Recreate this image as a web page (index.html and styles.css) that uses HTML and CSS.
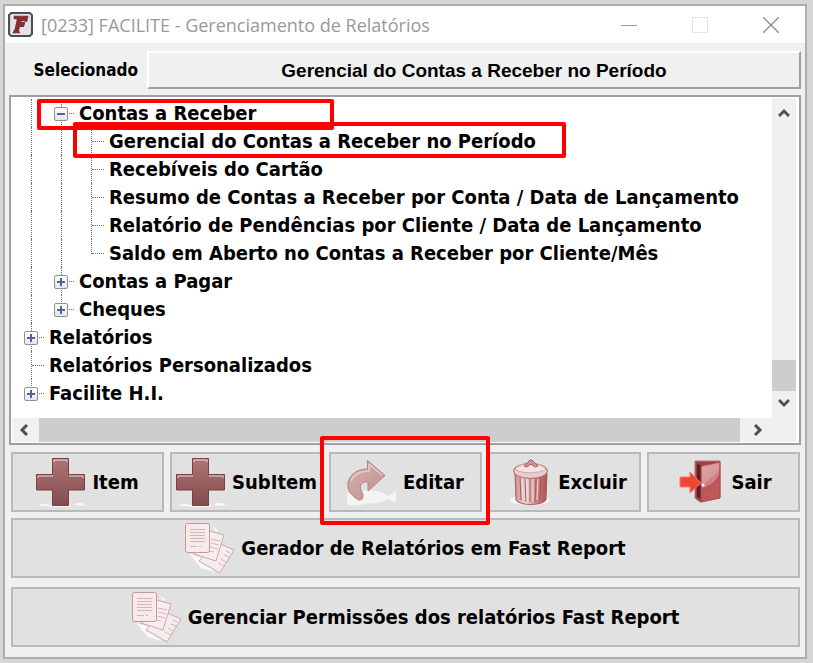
FILE: index.html
```html
<!DOCTYPE html>
<html lang="pt-BR">
<head>
  <meta charset="UTF-8">
  <title>Gerenciamento de Relatórios</title>
  <link rel="stylesheet" href="styles.css">
</head>

<body>
  <svg class="defs" aria-hidden="true">
    <defs>
      <linearGradient id="plus-fill" x1="0" y1="0" x2="0" y2="1">
        <stop offset="0" stop-color="#b07474"/>
        <stop offset="1" stop-color="#834c4e"/>
      </linearGradient>
      <linearGradient id="arrow-fill" x1="0" y1="0" x2="1" y2="1">
        <stop offset="0" stop-color="#d3b0b0"/>
        <stop offset="1" stop-color="#c39090"/>
      </linearGradient>
      <linearGradient id="bin-fill">
        <stop offset="0" stop-color="#c98b8b"/>
        <stop offset="0.35" stop-color="#f1dada"/>
        <stop offset="0.65" stop-color="#cd8484"/>
        <stop offset="1" stop-color="#ad4f4f"/>
      </linearGradient>
      <linearGradient id="door-fill" x1="0" y1="0" x2="0.4" y2="1">
        <stop offset="0" stop-color="#d39090"/>
        <stop offset="0.5" stop-color="#cb7878"/>
        <stop offset="0.55" stop-color="#b85457"/>
        <stop offset="1" stop-color="#bd5b5d"/>
      </linearGradient>
      <symbol id="icon-plus" viewBox="0 0 50 50">
        <path d="M2 49l4-2h6l3 2zM13 48h22v2H13zM37 48l4-2h5l4 3z" fill="#f8f8f8"/>
        <path d="M16.500 1.500h16v16h16v15.500h-16v15.500h-16V33H.5V17.500h16z" fill="url(#plus-fill)" stroke="#7d3f42"/>
        <path d="M18 5V3h13v2M2 21v-2h15M33 19h14v2" fill="none" stroke="#e9d3d3"/>
      </symbol>
      <symbol id="icon-arrow" viewBox="0 0 50 50">
        <path d="M0 36l14-2c12-2 21 0 27 5l8-5v12l-8-4c-5 4-14 5-20 4-7 2-16 4-21 1z" fill="#f4f4f4"/>
        <path d="M20.500 3.500L38 18.500 21 34v-9c-6-1-9 3-7 8 1 2 2 4 2 7-1 3-4 4-6 2C4 38 0 33 1 26 3 17 10 12 20.500 12z" fill="url(#arrow-fill)" stroke="#b87f80"/>
        <path d="M22 7v7c-9 0-16 4-18 10M22 7l13 11" fill="none" stroke="#e4cccc" stroke-width="1.500"/>
      </symbol>
      <symbol id="icon-bin" viewBox="0 0 50 50">
        <ellipse cx="28" cy="43" rx="20" ry="5" fill="#f7f7f7"/>
        <path d="M13 16l1 27c3 6 26 6 30 0l1-27z" fill="url(#bin-fill)" stroke="#a86060"/>
        <path d="M18 21l1 22M23 22l1 23M28 22v23M34 22l-1 23M39 21l-1 22" stroke="#a65a5b"/>
        <path d="M20 21l1 22M25 22l.5 23M31 22v23M36 22l-1 21" stroke="#f2dcdc"/>
        <ellipse cx="28.500" cy="14" rx="17" ry="7.500" fill="#e9cccc" stroke="#ab6262"/>
        <path d="M13 12c5-7 26-7 31 0-5 5-26 5-31 0z" fill="#f4e2e2" stroke="#d3a5a5"/>
        <path d="M22 9l6-6h2l6 6-3 1-4-3-4 3z" fill="#cf9393" stroke="#a65e5e"/>
      </symbol>
      <symbol id="icon-door" viewBox="0 0 50 50">
        <path d="M20 4h25v37l-20 4-5-4z" fill="#9a4144" stroke="#bb7778"/>
        <path d="M22 7l5 2v33l-5-2z" fill="#5d1e21"/>
        <path d="M26 9l19-4v36l-19 4z" fill="url(#door-fill)" stroke="#b4494d"/>
        <path d="M27 10l17-4v12c-4 7-10 11-17 13z" fill="#ecc9c9" opacity=".4"/>
        <path d="M5 20h10v-5l11 11-11 10v-6H5z" fill="#f04434" stroke="#ff7766"/>
        <circle cx="28" cy="28" r="1.500" fill="#fff"/>
      </symbol>
      <symbol id="icon-report" viewBox="0 0 50 50">
        <path d="M4 31l12 14 13 4-5-12zM28 4l6 3-3 2zM36 11l5 2-4 3z" fill="#f8f8f8"/>
        <path d="M31 19l18 8-14 23-21-12z" fill="#f5eded" stroke="#cfa7a8"/>
        <path d="M41 28l4 2M39 32l5 2M36 36l5 3M33 40l6 3" stroke="#d9b4b4"/>
        <path d="M21 7l18 5-8 26-22-7z" fill="#f6eeee" stroke="#cfa7a8"/>
        <path d="M26 16l9 2M26 20l8 2M25 24l8 2M24 28l5 1" stroke="#d9b4b4"/>
        <rect x=".5" y=".5" width="24" height="29" rx="2" fill="#f6eaea" stroke="#c99798"/>
        <path d="M5 6.500h15M5 9.500h15M5 12.500h15M5 15.500h15M5 18.500h15M5 23.500h7M14 23.500h2" stroke="#d8b4b4"/>
      </symbol>
      <symbol id="chevron" viewBox="0 0 12 12">
        <path d="M1 9l5-5 5 5" fill="none" stroke="#505050" stroke-width="3"/>
      </symbol>
    </defs>
  </svg>

  <div class="window">
    <div class="titlebar">
      <svg class="logo" viewBox="0 0 24 24">
        <path d="M3 1h18l2 2v18l-2 2H3l-2-2V3z" fill="#e4e2e4" stroke="#4a4f60" stroke-width="2"/>
        <path d="M6 4h13l-1 5-5-1-1 2h4l-1 4h-4l-1 4 1 2H5l2-4 2-9-3-1z" fill="#8e2b30" stroke="#7d2e33"/>
      </svg>
      <h1 class="title">[0233] FACILITE - Gerenciamento de Relatórios</h1>
      <div class="window-buttons">
        <button type="button" aria-label="Minimizar"><svg viewBox="0 0 16 16"><path d="M0 8.500h16" stroke="#999"/></svg></button>
        <button type="button" aria-label="Maximizar" disabled><svg viewBox="0 0 16 16"><path d="M.5.5h15v15H.5z" fill="none" stroke="#e4e4e4"/></svg></button>
        <button type="button" aria-label="Fechar"><svg viewBox="0 0 16 16"><path d="M0 0l16 16M16 0L0 16" stroke="#8c8c8c" stroke-width="1.300"/></svg></button>
      </div>
    </div>

    <div class="content">
      <div class="selected">
        <label for="selected-report">Selecionado</label>
        <output id="selected-report">Gerencial do Contas a Receber no Período</output>
      </div>

      <div class="tree-box">
        <ul class="tree">
          <li><span class="guide line"></span><span class="guide line tee"><button type="button" class="toggle minus" aria-label="Recolher"></button></span><span class="name mark-parent">Contas a Receber</span></li>
          <li><span class="guide line"></span><span class="guide line"></span><span class="guide line tee"></span><span class="name mark-child">Gerencial do Contas a Receber no Período</span></li>
          <li><span class="guide line"></span><span class="guide line"></span><span class="guide line tee"></span><span class="name">Recebíveis do Cartão</span></li>
          <li><span class="guide line"></span><span class="guide line"></span><span class="guide line tee"></span><span class="name">Resumo de Contas a Receber por Conta / Data de Lançamento</span></li>
          <li><span class="guide line"></span><span class="guide line"></span><span class="guide line tee"></span><span class="name">Relatório de Pendências por Cliente / Data de Lançamento</span></li>
          <li><span class="guide line"></span><span class="guide line"></span><span class="guide line tee last"></span><span class="name">Saldo em Aberto no Contas a Receber por Cliente/Mês</span></li>
          <li><span class="guide line"></span><span class="guide line tee"><button type="button" class="toggle" aria-label="Expandir"></button></span><span class="name">Contas a Pagar</span></li>
          <li><span class="guide line"></span><span class="guide line tee last"><button type="button" class="toggle" aria-label="Expandir"></button></span><span class="name">Cheques</span></li>
          <li><span class="guide line tee"><button type="button" class="toggle" aria-label="Expandir"></button></span><span class="name">Relatórios</span></li>
          <li><span class="guide line tee"></span><span class="name">Relatórios Personalizados</span></li>
          <li><span class="guide line tee last"><button type="button" class="toggle" aria-label="Expandir"></button></span><span class="name">Facilite H.I.</span></li>
        </ul>
        <div class="scroll vertical">
          <button type="button" aria-label="Subir"><svg><use href="#chevron"/></svg></button>
          <div class="thumb"></div>
          <button type="button" class="down" aria-label="Descer"><svg><use href="#chevron"/></svg></button>
        </div>
        <div class="scroll horizontal">
          <button type="button" class="left" aria-label="Esquerda"><svg><use href="#chevron"/></svg></button>
          <div class="thumb"></div>
          <button type="button" class="right" aria-label="Direita"><svg><use href="#chevron"/></svg></button>
        </div>
      </div>

      <div class="actions">
        <button type="button" class="button"><svg class="icon"><use href="#icon-plus"/></svg>Item</button>
        <button type="button" class="button"><svg class="icon"><use href="#icon-plus"/></svg>SubItem</button>
        <button type="button" class="button mark-edit"><svg class="icon"><use href="#icon-arrow"/></svg>Editar</button>
        <button type="button" class="button"><svg class="icon"><use href="#icon-bin"/></svg>Excluir</button>
        <button type="button" class="button"><svg class="icon"><use href="#icon-door"/></svg>Sair</button>
      </div>
      <div class="reports">
        <button type="button" class="button"><svg class="icon"><use href="#icon-report"/></svg>Gerador de Relatórios em Fast Report</button>
        <button type="button" class="button"><svg class="icon"><use href="#icon-report"/></svg>Gerenciar Permissões dos relatórios Fast Report</button>
      </div>
    </div>
  </div>
</body>
</html>
```
FILE: styles.css
```css
*,
*::before,
*::after {
  box-sizing: border-box;
}

body {
  margin: 0;
  padding: 4px 6px 4px 3px;
  background-color: #d6d6d6;
  color: #000;
  font-family: "DejaVu Sans Condensed", "DejaVu Sans", Tahoma, sans-serif;
  font-size: 20px;
  font-weight: bold;
}

button {
  padding: 0;
  border: none;
  background: none;
  color: inherit;
  font: inherit;
}

.defs {
  position: absolute;
  width: 0;
  height: 0;
}

.window {
  border: 2px solid #adadad;
  background-color: #f0f0f0;
}

/* Title bar */
.titlebar {
  display: flex;
  align-items: center;
  height: 37px;
  padding: 0 26px 0 3px;
  background-color: #fff;
}

.logo {
  width: 25px;
  height: 25px;
}

.title {
  flex: 1;
  margin: 0 0 0 8px;
  color: #999;
  font-family: "Open Sans", "Segoe UI", sans-serif;
  font-size: 18px;
  font-weight: normal;
  line-height: 24px;
}

.window-buttons {
  display: flex;
  gap: 55px;
}

.window-buttons svg {
  display: block;
  width: 16px;
  height: 16px;
}

.content {
  padding: 8px 4px 10px;
}

/* Selected report */
.selected {
  display: flex;
  align-items: stretch;
  height: 38px;
  margin-bottom: 6px;
  font-size: 17px;
}

.selected label {
  width: 138px;
  padding-right: 9px;
  line-height: 38px;
  text-align: right;
}

.selected output {
  flex: 1;
  border: 2px solid;
  border-color: #fff #a0a0a0 #a0a0a0 #fff;
  font-family: "Liberation Sans", Arial, sans-serif;
  font-size: 19px;
  line-height: 35px;
  text-align: center;
}

/* Tree */
.tree-box {
  display: grid;
  grid-template-columns: 1fr 24px;
  grid-template-rows: auto 24px;
  padding: 1px 3px 1px 1px;
  border: 2px solid #9a9fa8;
  background-color: #fff;
}

.tree {
  height: 320px;
  margin: 0;
  padding: 1px 0 0 4px;
  list-style: none;
  overflow: hidden;
}

.tree li {
  display: flex;
  height: 28px;
}

.guide {
  width: 15px;
  margin-left: 15px;
}

.line {
  border-left: 1px dotted #707070;
}

.tee {
  display: flex;
  align-items: center;
  position: relative;
}

.tee::before {
  content: "";
  width: 12px;
  border-top: 1px dotted #707070;
}

.last {
  height: 15px;
  align-items: flex-end;
}

.toggle {
  position: absolute;
  left: -8px;
  top: 8px;
  width: 14px;
  height: 14px;
  border: 1px solid #919191;
  border-radius: 2px;
  background: linear-gradient(#4b63a7, #4b63a7) center / 8px 2px no-repeat,
    linear-gradient(#4b63a7, #4b63a7) center / 2px 8px no-repeat,
    linear-gradient(#fff, #e6e6e6);
}

.minus {
  background: linear-gradient(#4b63a7, #4b63a7) center / 8px 2px no-repeat,
    linear-gradient(#fff, #e6e6e6);
}

.name {
  position: relative;
  padding-left: 3px;
  line-height: 28px;
  white-space: nowrap;
}

/* Red highlights */
.mark-parent::after,
.mark-child::after,
.mark-edit::after {
  content: "";
  position: absolute;
  border: 4px solid #fe0000;
  border-radius: 2px;
  z-index: 1;
}

.mark-parent::after {
  top: 0;
  left: -39px;
  width: 297px;
  height: 31px;
}

.mark-child::after {
  top: -5px;
  left: -33px;
  width: 493px;
  height: 36px;
}

.mark-edit::after {
  inset: -18px -10px -15px -11px;
}

/* Scroll bars */
.scroll {
  display: flex;
  background-color: #f0f0f0;
}

.scroll button {
  display: flex;
  align-items: center;
  justify-content: center;
  width: 24px;
  height: 24px;
}

.scroll svg {
  width: 12px;
  height: 12px;
}

.scroll .thumb {
  background-color: #cdcdcd;
}

.vertical {
  flex-direction: column;
  padding: 3px 0;
}

.vertical .thumb {
  height: 31px;
  margin-top: auto;
}

.horizontal {
  grid-column: 1 / 3;
  padding-right: 26px;
}

.horizontal .thumb {
  flex: 1;
  margin: 0 6px 0 3px;
}

.down svg {
  transform: rotate(180deg);
}

.left svg {
  transform: rotate(-90deg);
}

.right svg {
  transform: rotate(90deg);
}

/* Buttons */
.button {
  display: flex;
  align-items: center;
  justify-content: center;
  gap: 6px;
  position: relative;
  height: 60px;
  border: 2px solid #b9b9b9;
  background-color: #e1e1e1;
  white-space: nowrap;
}

.icon {
  flex: none;
  width: 50px;
  height: 50px;
}

.actions {
  display: grid;
  grid-template-columns: repeat(5, 1fr);
  gap: 6px;
  margin: 7px 1px 6px 2px;
}

.reports {
  display: grid;
  gap: 9px;
  margin: 0 1px 0 2px;
}
```
